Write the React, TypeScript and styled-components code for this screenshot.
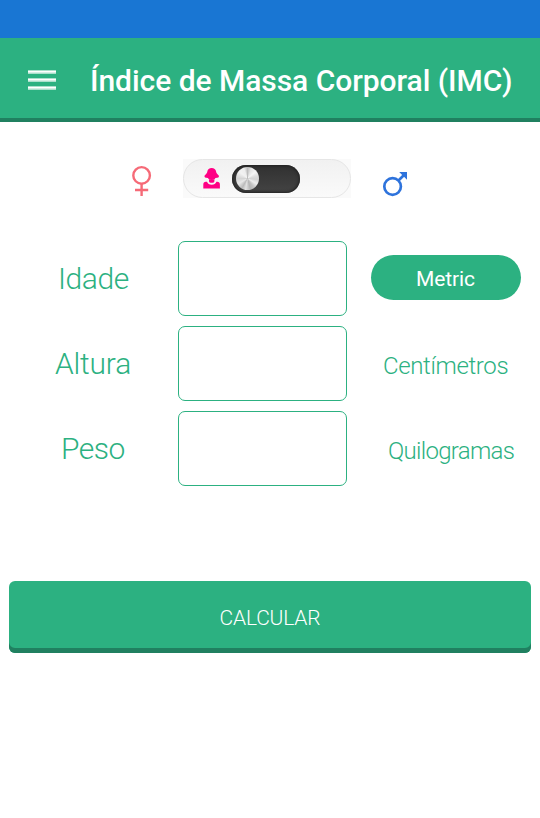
import React from "react";
import styled, { createGlobalStyle } from "styled-components";

const green = "#2cb181";
const darkGreen = "#208060";

const GlobalStyle = createGlobalStyle`
  * { box-sizing: border-box; }
  body { margin: 0; background: #fff; font-family: Roboto, "Liberation Sans", sans-serif; }
  button, input { font-family: inherit; }
`;

const Screen = styled.div`
  width: 540px;
  height: 818px;
  overflow: hidden;
  background: #fff;
`;

const StatusBar = styled.div`
  height: 38px;
  background: #1976d3;
`;

const Header = styled.header`
  display: flex;
  align-items: center;
  height: 84px;
  padding-left: 28px;
  background: ${green};
  border-bottom: 4px solid ${darkGreen};
`;

const MenuButton = styled.button`
  display: flex;
  width: 28px;
  height: 22px;
  margin: 3px 34px 0 0;
  padding: 0;
  border: 0;
  background: none;
`;

const Title = styled.h1`
  margin: 5px 0 0;
  font-size: 30px;
  font-weight: 500;
  line-height: 36px;
  letter-spacing: -0.04px;
  white-space: nowrap;
  color: #fff;
`;

const GenderRow = styled.section`
  display: flex;
  align-items: flex-start;
  height: 119px;
  padding: 37px 0 0 130px;
`;

const FemaleMark = styled.svg`
  width: 24px;
  height: 32px;
  margin: 6px 29px 0 0;
`;

const MaleMark = styled.svg`
  width: 28px;
  height: 28px;
  margin: 11px 0 0 31px;
`;

const Switch = styled.div`
  display: flex;
  align-items: center;
  width: 168px;
  height: 39px;
  background: #fafafa;
`;

const SwitchPlate = styled.div`
  display: flex;
  align-items: center;
  width: 168px;
  height: 39px;
  padding-left: 19px;
  border: 1px solid #e6e6e6;
  border-radius: 20px;
  background: linear-gradient(#f1f1f1, #fafafa);
`;

const WomanIcon = styled.svg`
  width: 17px;
  height: 21px;
  margin: 0 11.5px 0 0;
`;

const Track = styled.div`
  display: flex;
  align-items: center;
  width: 68.5px;
  height: 28px;
  padding-left: 4px;
  border-radius: 14px;
  background: linear-gradient(#303030, #444);
  box-shadow: inset 0 0 3px 1px #202020;
`;

const Knob = styled.div`
  width: 23px;
  height: 23px;
  border-radius: 50%;
  background: conic-gradient(
    from 0deg,
    #bdbdbd, #e2e2e2 20deg, #f5f5f5 50deg, #dcdcdc 75deg, #d2d2d2 95deg,
    #ededed 120deg, #c2c2c2 145deg, #b5b5b5 165deg, #e2e2e2 190deg,
    #bababa 210deg, #e8e8e8 240deg, #d4d4d4 270deg, #f2f2f2 310deg,
    #eeeeee 340deg, #bdbdbd
  );
`;

const Form = styled.form`
  display: flex;
  flex-direction: column;
`;

const Fields = styled.div`
  display: grid;
  gap: 10px;
`;

const FieldRow = styled.div`
  display: grid;
  grid-template-columns: 178px 169px 193px;
  height: 75px;
`;

const Label = styled.label<{ $start: number; $tracking: number }>`
  padding: 20px 0 0 ${(p) => p.$start}px;
  font-size: 30px;
  font-weight: 300;
  line-height: 36px;
  letter-spacing: ${(p) => p.$tracking}px;
  color: ${green};
`;

const Field = styled.input`
  width: 169px;
  height: 75px;
  padding: 0 12px;
  border: 1px solid ${green};
  border-radius: 7px;
  outline: 0;
  background: #fff;
  font-size: 28px;
  color: ${green};
`;

const UnitButton = styled.button`
  width: 150px;
  height: 45px;
  margin: 14px 0 0 24px;
  padding: 3px 1px 0 0;
  border: 0;
  border-radius: 23px;
  background: ${green};
  font-size: 21px;
  font-weight: 400;
  letter-spacing: -0.1px;
  color: #fff;
`;

const Unit = styled.span<{ $start: number; $tracking: number }>`
  padding: 26px 0 0 ${(p) => p.$start}px;
  font-size: 24px;
  font-weight: 300;
  line-height: 28px;
  letter-spacing: ${(p) => p.$tracking}px;
  color: ${green};
`;

const Submit = styled.button`
  width: 522px;
  height: 72px;
  margin: 95px 9px 0;
  padding: 2px 0 0;
  border: 0;
  border-radius: 6px;
  background: ${green};
  box-shadow: inset 0 -5px 0 ${darkGreen};
  font-size: 21px;
  font-weight: 300;
  letter-spacing: -0.2px;
  color: #fff;
`;

export default function App() {
  return (
    <Screen>
      <GlobalStyle />
      <StatusBar />
      <Header>
        <MenuButton aria-label="Menu">
          <svg width="28" height="22" viewBox="0 0 28 22">
            <g fill="#fff">
              <path opacity=".6" d="M0 1h28v4H0zM0 9h28v4H0zM0 17h28v4H0z" />
              <path d="M0 2h28v1.500H0zM0 10h28v1.500H0zM0 18h28v1.500H0z" />
            </g>
          </svg>
        </MenuButton>
        <Title>Índice de Massa Corporal (IMC)</Title>
      </Header>

      <GenderRow>
        <FemaleMark viewBox="0 0 24 32" fill="none" stroke="#f66a77" strokeWidth="2.4">
          <circle cx="11.6" cy="10.4" r="8.3" />
          <path d="M11.6 18.7V31M5 25h13.2" />
        </FemaleMark>
        <Switch>
          <SwitchPlate>
            <WomanIcon viewBox="0 0 17 21" fill="#ff0084">
              <path d="M8.700 0C6.300 0 4.600 1.300 4.400 3.200C4.200 5 3.200 6 1.500 7.800C1.200 9.200 2.200 10 5 10C5.300 11.300 6.500 12 8.700 12S12.100 11.300 12.400 10C15.200 10 16.200 9.200 15.900 7.800C14.200 6 13.200 5 13 3.200C12.800 1.300 11.100 0 8.700 0Z" />
              <path d="M6 11.500h5.400v1.800c0 1-1 1.500-2.700 1.500S6 14.300 6 13.300z" />
              <path d="M.3 20.500v-4c0-1.700 1-2.700 2.500-2.700h1.200c.7 2.100 2.300 3 4.700 3s4-.9 4.700-3h.9c1.600 0 2.600 1 2.600 2.700v4z" />
            </WomanIcon>
            <Track>
              <Knob />
            </Track>
          </SwitchPlate>
        </Switch>
        <MaleMark viewBox="0 0 28 28" fill="none" stroke="#2e73dc" strokeWidth="2.7">
          <circle cx="10.600" cy="16.500" r="8.300" />
          <path d="M16.500 10.500l5.500-5.500" />
          <path d="M17.200 2H25v7.800z" fill="#2e73dc" stroke="none" />
        </MaleMark>
      </GenderRow>

      <Form onSubmit={(e) => e.preventDefault()}>
        <Fields>
          <FieldRow>
            <Label htmlFor="idade" $start={58} $tracking={-0.4}>Idade</Label>
            <Field id="idade" />
            <UnitButton type="button">Metric</UnitButton>
          </FieldRow>
          <FieldRow>
            <Label htmlFor="altura" $start={55} $tracking={-0.2}>Altura</Label>
            <Field id="altura" />
            <Unit $start={36} $tracking={-0.36}>Centímetros</Unit>
          </FieldRow>
          <FieldRow>
            <Label htmlFor="peso" $start={61} $tracking={-0.5}>Peso</Label>
            <Field id="peso" />
            <Unit $start={41} $tracking={-0.7}>Quilogramas</Unit>
          </FieldRow>
        </Fields>
        <Submit type="submit">CALCULAR</Submit>
      </Form>
    </Screen>
  );
}
